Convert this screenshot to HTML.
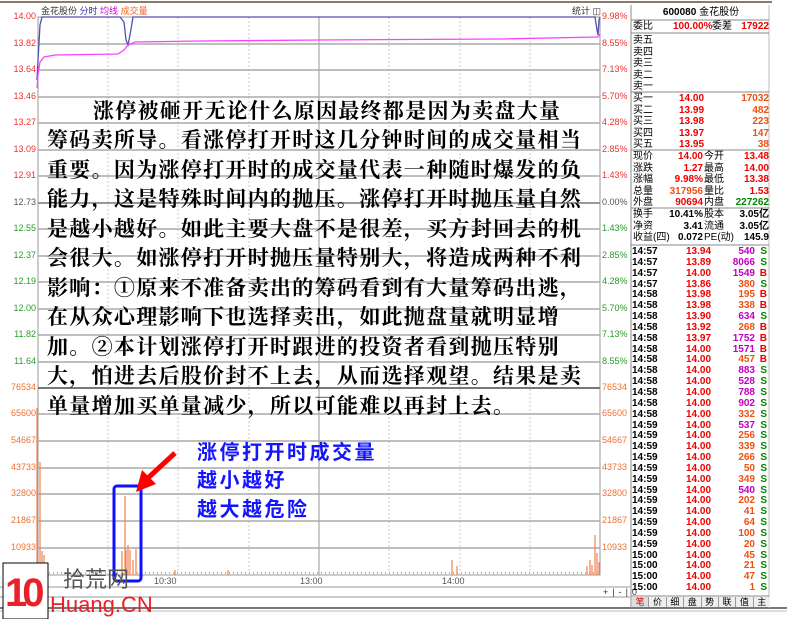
<!DOCTYPE html>
<html><head><meta charset="utf-8">
<style>
body{margin:0;width:787px;height:619px;background:#fff;overflow:hidden;position:relative;font-family:"Liberation Sans","Noto Sans CJK SC",sans-serif}
.ax{position:absolute;font-size:9px;font-family:"Liberation Sans",sans-serif}
.l{position:absolute;left:0;width:36px;text-align:right}
.r{position:absolute;left:602px}
.t{position:absolute;font-family:"Liberation Serif","Noto Serif CJK SC",serif;font-weight:700;font-size:21px;letter-spacing:1.3px;color:#000;white-space:nowrap;line-height:24px}
.p{position:absolute;left:631px;width:140px;font-size:10px;font-weight:700;line-height:11px}
.row{position:relative;height:11.5px;white-space:nowrap}
.row span{position:absolute}
.tr{position:relative;height:10.85px;line-height:10.85px;white-space:nowrap}
.tr span{position:absolute;font-family:"Liberation Sans",sans-serif}
.bl{position:absolute;font-size:20px;color:#1414ff;font-family:"Noto Sans CJK SC",sans-serif;font-weight:700;letter-spacing:2.5px}
</style></head><body>
<svg width="787" height="619" style="position:absolute;left:0;top:0">
<line x1="0" y1="2" x2="772" y2="2" stroke="#8a7a6a" stroke-width="2"/>
<rect x="38" y="17" width="562" height="558" fill="none" stroke="#999"/>
<g stroke="#c8c8c8" stroke-dasharray="2,2">
<line x1="108" y1="17" x2="108" y2="575"/><line x1="178" y1="17" x2="178" y2="575"/><line x1="249" y1="17" x2="249" y2="575"/><line x1="389" y1="17" x2="389" y2="575"/><line x1="460" y1="17" x2="460" y2="575"/><line x1="530" y1="17" x2="530" y2="575"/>
</g>
<line x1="319" y1="17" x2="319" y2="575" stroke="#999"/>
<g stroke="#aaa" stroke-width="1.5">
<line x1="38" y1="44" x2="600" y2="44"/><line x1="38" y1="70" x2="600" y2="70"/><line x1="38" y1="97" x2="600" y2="97"/><line x1="38" y1="123" x2="600" y2="123"/><line x1="38" y1="150" x2="600" y2="150"/><line x1="38" y1="176" x2="600" y2="176"/><line x1="38" y1="203" x2="600" y2="203" stroke="#777"/><line x1="38" y1="229" x2="600" y2="229"/><line x1="38" y1="256" x2="600" y2="256"/><line x1="38" y1="282" x2="600" y2="282"/><line x1="38" y1="309" x2="600" y2="309"/><line x1="38" y1="335" x2="600" y2="335"/><line x1="38" y1="362" x2="600" y2="362"/>
<line x1="38" y1="388" x2="600" y2="388" stroke="#777" stroke-width="2"/>
<line x1="38" y1="414" x2="600" y2="414"/><line x1="38" y1="441" x2="600" y2="441"/><line x1="38" y1="468" x2="600" y2="468"/><line x1="38" y1="494" x2="600" y2="494"/><line x1="38" y1="521" x2="600" y2="521"/><line x1="38" y1="548" x2="600" y2="548"/>
</g>
<line x1="0" y1="587" x2="630" y2="587" stroke="#999"/>
<line x1="0" y1="597" x2="630" y2="597" stroke="#999"/>
<line x1="0" y1="608" x2="787" y2="608" stroke="#777" stroke-width="2"/>
<line x1="0" y1="611" x2="787" y2="611" stroke="#bbb"/>
<line x1="631" y1="5" x2="631" y2="608" stroke="#888"/>
<line x1="769" y1="5" x2="769" y2="608" stroke="#bbb"/>
<g stroke="#888"><line x1="631" y1="20" x2="769" y2="20"/><line x1="631" y1="33" x2="769" y2="33"/><line x1="631" y1="92" x2="769" y2="92"/><line x1="631" y1="150" x2="769" y2="150"/><line x1="631" y1="208" x2="769" y2="208"/><line x1="631" y1="245" x2="769" y2="245"/><line x1="631" y1="596" x2="769" y2="596"/></g>
<polyline fill="none" stroke="#5050b0" stroke-width="1.3" points="37,80 38,60 40,25 42,17 120,17 124,22 126,40 128,45 130,35 133,17 595,17 597,30 598,35 599,20 600,17"/>
<polyline fill="none" stroke="#ff40ff" stroke-width="1.3" points="37,88 38,75 40,62 44,57 55,55 118,54 124,50 128,45 135,42 200,41 320,40 500,39 598,37 600,34"/>
<g stroke="#f08050" stroke-width="1.2">
<line x1="37" y1="575" x2="37" y2="408"/><line x1="40" y1="575" x2="40" y2="462"/><line x1="42" y1="575" x2="42" y2="551"/><line x1="44" y1="575" x2="44" y2="555"/><line x1="125" y1="575" x2="125" y2="496"/><line x1="128" y1="575" x2="128" y2="545"/><line x1="126" y1="575" x2="126" y2="550"/><line x1="130" y1="575" x2="130" y2="550"/><line x1="133" y1="575" x2="133" y2="560"/><line x1="136" y1="575" x2="136" y2="549"/><line x1="122" y1="575" x2="122" y2="551"/>
<line x1="452" y1="575" x2="452" y2="560"/><line x1="457" y1="575" x2="457" y2="566"/><line x1="175" y1="575" x2="175" y2="570"/><line x1="228" y1="575" x2="228" y2="570"/>
<line x1="587" y1="575" x2="587" y2="566"/><line x1="590" y1="575" x2="590" y2="560"/><line x1="592" y1="575" x2="592" y2="565"/><line x1="595" y1="575" x2="595" y2="535"/><line x1="597" y1="575" x2="597" y2="553"/><line x1="599" y1="575" x2="599" y2="562"/>
</g>
<line x1="45" y1="573" x2="598" y2="573" stroke="#f0a080" stroke-width="2" stroke-dasharray="1,3"/>
<rect x="114" y="486" width="27" height="95" rx="3" fill="none" stroke="#1010ff" stroke-width="3"/>
<line x1="175" y1="453" x2="148" y2="478" stroke="#f00" stroke-width="5"/>
<polygon points="136,492 142,470 156,484" fill="#f00"/>
<rect x="3" y="563" width="45" height="56" fill="#fff" stroke="#000"/>
<text x="5" y="606" font-size="40" font-weight="bold" fill="#e8202a" font-family="Liberation Sans" letter-spacing="-5">10</text>
<text x="63" y="587" font-size="22" fill="#555" font-family="Noto Sans CJK SC">拾荒网</text>
<text x="50" y="612" font-size="22" fill="#e8202a" font-family="Liberation Sans">Huang.CN</text>
</svg>
<div class="ax" style="left:41px;top:4px;color:#333">金花股份 <span style="color:#3030a0">分时</span> <span style="color:#d000d0">均线</span> <span style="color:#f06020">成交量</span></div>
<div class="ax" style="left:572px;top:4px;color:#333">统计 ◫</div>
<div class="ax" style="left:154px;top:576px;color:#555">10:30</div>
<div class="ax" style="left:300px;top:576px;color:#555">13:00</div>
<div class="ax" style="left:442px;top:576px;color:#555">14:00</div>
<div class="ax" style="left:603px;top:587px;color:#333;letter-spacing:4px">+|-|0</div>
<div class="ax" style="left:0;top:0;width:37px;color:#f03030">
<div class="l" style="top:11px">14.00</div><div class="l" style="top:38px">13.82</div><div class="l" style="top:64px">13.64</div><div class="l" style="top:91px">13.46</div><div class="l" style="top:117px">13.27</div><div class="l" style="top:144px">13.09</div><div class="l" style="top:170px">12.91</div><div class="l" style="top:197px;color:#555">12.73</div>
<div class="l" style="top:223px;color:#2a9a2a">12.55</div><div class="l" style="top:250px;color:#2a9a2a">12.37</div><div class="l" style="top:276px;color:#2a9a2a">12.19</div><div class="l" style="top:303px;color:#2a9a2a">12.00</div><div class="l" style="top:329px;color:#2a9a2a">11.82</div><div class="l" style="top:356px;color:#2a9a2a">11.64</div>
<div class="l" style="top:382px;color:#f07030">76534</div><div class="l" style="top:408px;color:#f07030">65600</div><div class="l" style="top:435px;color:#f07030">54667</div><div class="l" style="top:462px;color:#f07030">43733</div><div class="l" style="top:488px;color:#f07030">32800</div><div class="l" style="top:515px;color:#f07030">21867</div><div class="l" style="top:542px;color:#f07030">10933</div>
</div>
<div class="ax" style="left:0;top:0;color:#f03030">
<div class="r" style="top:11px">9.98%</div><div class="r" style="top:38px">8.55%</div><div class="r" style="top:64px">7.13%</div><div class="r" style="top:91px">5.70%</div><div class="r" style="top:117px">4.28%</div><div class="r" style="top:144px">2.85%</div><div class="r" style="top:170px">1.43%</div><div class="r" style="top:197px;color:#555">0.00%</div>
<div class="r" style="top:223px;color:#2a9a2a">1.43%</div><div class="r" style="top:250px;color:#2a9a2a">2.85%</div><div class="r" style="top:276px;color:#2a9a2a">4.28%</div><div class="r" style="top:303px;color:#2a9a2a">5.70%</div><div class="r" style="top:329px;color:#2a9a2a">7.13%</div><div class="r" style="top:356px;color:#2a9a2a">8.55%</div>
<div class="r" style="top:382px;color:#f07030">76534</div><div class="r" style="top:408px;color:#f07030">65600</div><div class="r" style="top:435px;color:#f07030">54667</div><div class="r" style="top:462px;color:#f07030">43733</div><div class="r" style="top:488px;color:#f07030">32800</div><div class="r" style="top:515px;color:#f07030">21867</div><div class="r" style="top:542px;color:#f07030">10933</div>
</div>

<div class="t" style="left:93px;top:99px">涨停被砸开无论什么原因最终都是因为卖盘大量</div>
<div class="t" style="left:47px;top:128px">筹码卖所导。看涨停打开时这几分钟时间的成交量相当</div>
<div class="t" style="left:47px;top:158px">重要。因为涨停打开时的成交量代表一种随时爆发的负</div>
<div class="t" style="left:47px;top:187px">能力，这是特殊时间内的抛压。涨停打开时抛压量自然</div>
<div class="t" style="left:47px;top:217px">是越小越好。如此主要大盘不是很差，买方封回去的机</div>
<div class="t" style="left:47px;top:246px">会很大。如涨停打开时抛压量特别大，将造成两种不利</div>
<div class="t" style="left:47px;top:276px">影响：①原来不准备卖出的筹码看到有大量筹码出逃，</div>
<div class="t" style="left:47px;top:305px">在从众心理影响下也选择卖出，如此抛盘量就明显增</div>
<div class="t" style="left:47px;top:335px">加。②本计划涨停打开时跟进的投资者看到抛压特别</div>
<div class="t" style="left:47px;top:364px">大，怕进去后股价封不上去，从而选择观望。结果是卖</div>
<div class="t" style="left:47px;top:394px">单量增加买单量减少，所以可能难以再封上去。</div>

<div class="bl" style="left:197px;top:436px">涨停打开时成交量</div>
<div class="bl" style="left:197px;top:464px">越小越好</div>
<div class="bl" style="left:197px;top:493px">越大越危险</div>

<div class="p" style="top:7px;font-weight:700"><div style="text-align:center;font-size:10px">600080 <span style="font-weight:400">金花股份</span></div></div>
<div class="p" style="top:21px">
<div class="row"><span style="left:2px;font-weight:400">委比</span><span style="left:42px;color:#e00">100.00%</span><span style="left:81px;font-weight:400">委差</span><span style="right:2px;color:#e00">17922</span></div>
</div>
<div class="p" style="top:35px;font-weight:400">
<div class="row"><span style="left:2px">卖五</span></div><div class="row"><span style="left:2px">卖四</span></div><div class="row"><span style="left:2px">卖三</span></div><div class="row"><span style="left:2px">卖二</span></div><div class="row"><span style="left:2px">卖一</span></div>
</div>
<div class="p" style="top:93px">
<div class="row"><span style="left:2px;font-weight:400">买一</span><span style="left:48px;color:#e00">14.00</span><span style="right:2px;color:#f05010">17032</span></div>
<div class="row"><span style="left:2px;font-weight:400">买二</span><span style="left:48px;color:#e00">13.99</span><span style="right:2px;color:#f05010">482</span></div>
<div class="row"><span style="left:2px;font-weight:400">买三</span><span style="left:48px;color:#e00">13.98</span><span style="right:2px;color:#f05010">223</span></div>
<div class="row"><span style="left:2px;font-weight:400">买四</span><span style="left:48px;color:#e00">13.97</span><span style="right:2px;color:#f05010">147</span></div>
<div class="row"><span style="left:2px;font-weight:400">买五</span><span style="left:48px;color:#e00">13.95</span><span style="right:2px;color:#f05010">38</span></div>
</div>
<div class="p" style="top:151px">
<div class="row"><span style="left:2px;font-weight:400">现价</span><span style="right:68px;color:#e00">14.00</span><span style="left:73px;font-weight:400">今开</span><span style="right:2px;color:#e00">13.48</span></div>
<div class="row"><span style="left:2px;font-weight:400">涨跌</span><span style="right:68px;color:#e00">1.27</span><span style="left:73px;font-weight:400">最高</span><span style="right:2px;color:#e00">14.00</span></div>
<div class="row"><span style="left:2px;font-weight:400">涨幅</span><span style="right:68px;color:#e00">9.98%</span><span style="left:73px;font-weight:400">最低</span><span style="right:2px;color:#e00">13.38</span></div>
<div class="row"><span style="left:2px;font-weight:400">总量</span><span style="right:68px;color:#f05010">317956</span><span style="left:73px;font-weight:400">量比</span><span style="right:2px;color:#e00">1.53</span></div>
<div class="row"><span style="left:2px;font-weight:400">外盘</span><span style="right:68px;color:#e00">90694</span><span style="left:73px;font-weight:400">内盘</span><span style="right:2px;color:#080">227262</span></div>
</div>
<div class="p" style="top:209px">
<div class="row"><span style="left:2px;font-weight:400">换手</span><span style="right:68px">10.41%</span><span style="left:73px;font-weight:400">股本</span><span style="right:2px">3.05亿</span></div>
<div class="row"><span style="left:2px;font-weight:400">净资</span><span style="right:68px">3.41</span><span style="left:73px;font-weight:400">流通</span><span style="right:2px">3.05亿</span></div>
<div class="row"><span style="left:2px;font-weight:400">收益(四)</span><span style="right:68px">0.072</span><span style="left:73px;font-weight:400">PE(动)</span><span style="right:2px">145.9</span></div>
</div>
<div class="p" style="top:247px" id="trades">
<div class="tr"><span style="left:1px">14:57</span><span style="left:55px;color:#e00">13.94</span><span style="right:16px;color:#c000c0">540</span><span style="right:4px;color:#080">S</span></div>
<div class="tr"><span style="left:1px">14:57</span><span style="left:55px;color:#e00">13.89</span><span style="right:16px;color:#c000c0">8066</span><span style="right:4px;color:#080">S</span></div>
<div class="tr"><span style="left:1px">14:57</span><span style="left:55px;color:#e00">14.00</span><span style="right:16px;color:#c000c0">1549</span><span style="right:4px;color:#e00">B</span></div>
<div class="tr"><span style="left:1px">14:57</span><span style="left:55px;color:#e00">13.86</span><span style="right:16px;color:#f05010">380</span><span style="right:4px;color:#080">S</span></div>
<div class="tr"><span style="left:1px">14:58</span><span style="left:55px;color:#e00">13.98</span><span style="right:16px;color:#f05010">195</span><span style="right:4px;color:#e00">B</span></div>
<div class="tr"><span style="left:1px">14:58</span><span style="left:55px;color:#e00">13.98</span><span style="right:16px;color:#f05010">338</span><span style="right:4px;color:#e00">B</span></div>
<div class="tr"><span style="left:1px">14:58</span><span style="left:55px;color:#e00">13.90</span><span style="right:16px;color:#c000c0">634</span><span style="right:4px;color:#080">S</span></div>
<div class="tr"><span style="left:1px">14:58</span><span style="left:55px;color:#e00">13.92</span><span style="right:16px;color:#f05010">268</span><span style="right:4px;color:#e00">B</span></div>
<div class="tr"><span style="left:1px">14:58</span><span style="left:55px;color:#e00">13.97</span><span style="right:16px;color:#c000c0">1752</span><span style="right:4px;color:#e00">B</span></div>
<div class="tr"><span style="left:1px">14:58</span><span style="left:55px;color:#e00">14.00</span><span style="right:16px;color:#c000c0">1571</span><span style="right:4px;color:#e00">B</span></div>
<div class="tr"><span style="left:1px">14:58</span><span style="left:55px;color:#e00">14.00</span><span style="right:16px;color:#f05010">457</span><span style="right:4px;color:#e00">B</span></div>
<div class="tr"><span style="left:1px">14:58</span><span style="left:55px;color:#e00">14.00</span><span style="right:16px;color:#c000c0">883</span><span style="right:4px;color:#080">S</span></div>
<div class="tr"><span style="left:1px">14:58</span><span style="left:55px;color:#e00">14.00</span><span style="right:16px;color:#c000c0">528</span><span style="right:4px;color:#080">S</span></div>
<div class="tr"><span style="left:1px">14:58</span><span style="left:55px;color:#e00">14.00</span><span style="right:16px;color:#c000c0">788</span><span style="right:4px;color:#080">S</span></div>
<div class="tr"><span style="left:1px">14:58</span><span style="left:55px;color:#e00">14.00</span><span style="right:16px;color:#c000c0">902</span><span style="right:4px;color:#080">S</span></div>
<div class="tr"><span style="left:1px">14:58</span><span style="left:55px;color:#e00">14.00</span><span style="right:16px;color:#f05010">332</span><span style="right:4px;color:#080">S</span></div>
<div class="tr"><span style="left:1px">14:59</span><span style="left:55px;color:#e00">14.00</span><span style="right:16px;color:#c000c0">537</span><span style="right:4px;color:#080">S</span></div>
<div class="tr"><span style="left:1px">14:59</span><span style="left:55px;color:#e00">14.00</span><span style="right:16px;color:#f05010">256</span><span style="right:4px;color:#080">S</span></div>
<div class="tr"><span style="left:1px">14:59</span><span style="left:55px;color:#e00">14.00</span><span style="right:16px;color:#f05010">339</span><span style="right:4px;color:#080">S</span></div>
<div class="tr"><span style="left:1px">14:59</span><span style="left:55px;color:#e00">14.00</span><span style="right:16px;color:#f05010">266</span><span style="right:4px;color:#080">S</span></div>
<div class="tr"><span style="left:1px">14:59</span><span style="left:55px;color:#e00">14.00</span><span style="right:16px;color:#f05010">50</span><span style="right:4px;color:#080">S</span></div>
<div class="tr"><span style="left:1px">14:59</span><span style="left:55px;color:#e00">14.00</span><span style="right:16px;color:#f05010">349</span><span style="right:4px;color:#080">S</span></div>
<div class="tr"><span style="left:1px">14:59</span><span style="left:55px;color:#e00">14.00</span><span style="right:16px;color:#c000c0">540</span><span style="right:4px;color:#080">S</span></div>
<div class="tr"><span style="left:1px">14:59</span><span style="left:55px;color:#e00">14.00</span><span style="right:16px;color:#f05010">202</span><span style="right:4px;color:#080">S</span></div>
<div class="tr"><span style="left:1px">14:59</span><span style="left:55px;color:#e00">14.00</span><span style="right:16px;color:#f05010">41</span><span style="right:4px;color:#080">S</span></div>
<div class="tr"><span style="left:1px">14:59</span><span style="left:55px;color:#e00">14.00</span><span style="right:16px;color:#f05010">64</span><span style="right:4px;color:#080">S</span></div>
<div class="tr"><span style="left:1px">14:59</span><span style="left:55px;color:#e00">14.00</span><span style="right:16px;color:#f05010">100</span><span style="right:4px;color:#080">S</span></div>
<div class="tr"><span style="left:1px">14:59</span><span style="left:55px;color:#e00">14.00</span><span style="right:16px;color:#f05010">20</span><span style="right:4px;color:#080">S</span></div>
<div class="tr"><span style="left:1px">15:00</span><span style="left:55px;color:#e00">14.00</span><span style="right:16px;color:#f05010">45</span><span style="right:4px;color:#080">S</span></div>
<div class="tr"><span style="left:1px">15:00</span><span style="left:55px;color:#e00">14.00</span><span style="right:16px;color:#f05010">21</span><span style="right:4px;color:#080">S</span></div>
<div class="tr"><span style="left:1px">15:00</span><span style="left:55px;color:#e00">14.00</span><span style="right:16px;color:#f05010">47</span><span style="right:4px;color:#080">S</span></div>
<div class="tr"><span style="left:1px">15:00</span><span style="left:55px;color:#e00">14.00</span><span style="right:16px;color:#f05010">1</span><span style="right:4px;color:#080">S</span></div>
</div>
<div style="position:absolute;left:632px;top:597px;width:138px;height:10px;display:flex;font-size:9px;line-height:10px;background:#eee">
<span style="flex:1;text-align:center;color:#e00;background:#ddd;border-right:1px solid #999">笔</span><span style="flex:1;text-align:center;border-right:1px solid #999">价</span><span style="flex:1;text-align:center;border-right:1px solid #999">细</span><span style="flex:1;text-align:center;border-right:1px solid #999">盘</span><span style="flex:1;text-align:center;border-right:1px solid #999">势</span><span style="flex:1;text-align:center;border-right:1px solid #999">联</span><span style="flex:1;text-align:center;border-right:1px solid #999">值</span><span style="flex:1;text-align:center">主</span>
</div>
</body></html>
